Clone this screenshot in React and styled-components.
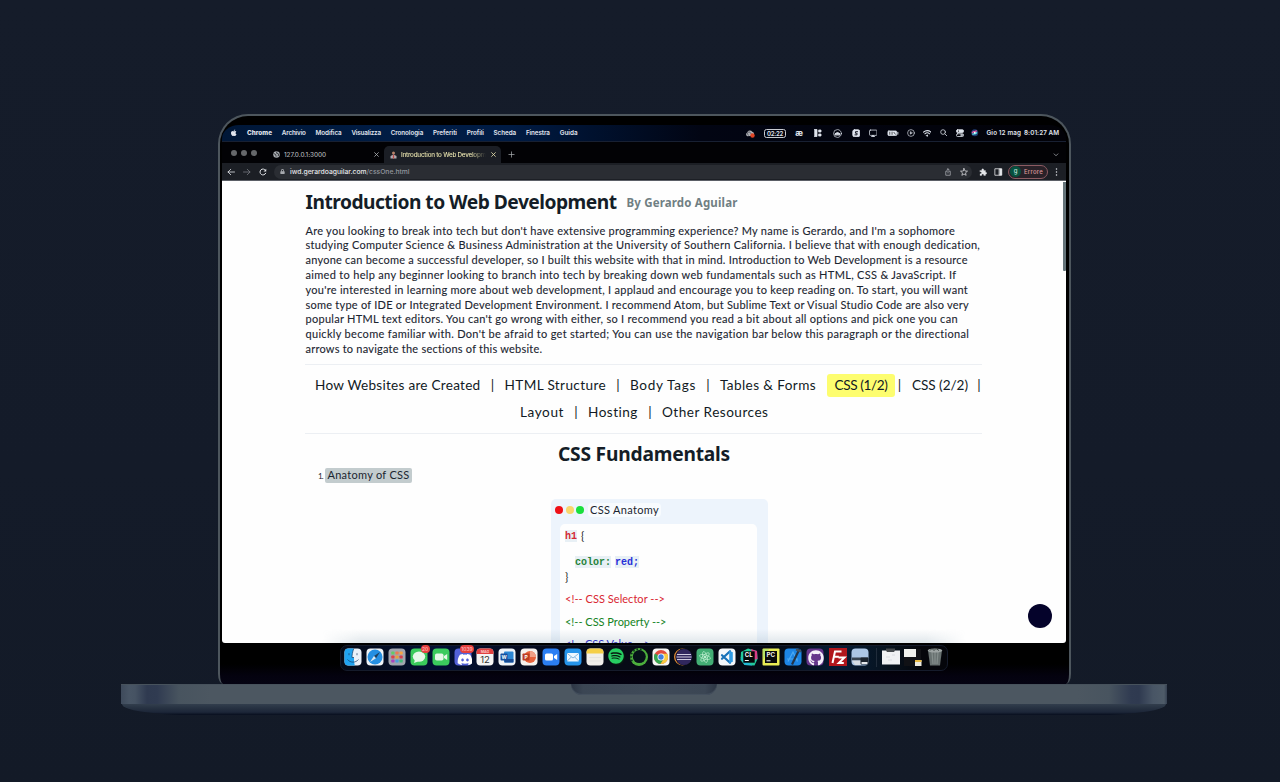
import React, { useLayoutEffect, useRef, useState } from "react";
import styled, { createGlobalStyle, css } from "styled-components";
import { FaApple, FaGithub, FaDiscord, FaSpotify, FaLock } from "react-icons/fa";

const rounded = `Lato, "Noto Sans", sans-serif`;
const heading = `"Noto Sans", "Open Sans", sans-serif`;
const system = `Inter, Roboto, sans-serif`;

const GlobalStyle = createGlobalStyle`
  * { box-sizing: border-box; }
  html, body { margin: 0; background: #141b29; }
  body { width: 1280px; height: 782px; overflow: hidden; }
`;

/* ---------- text that fills a known measure ---------- */
const Measure = styled.span`
  display: inline-block;
  flex: none;
  white-space: pre;
  width: ${(p) => p.$w}px;
`;

function Fit({ w, children, className }) {
  const ref = useRef(null);
  const [spacing, setSpacing] = useState(0);
  useLayoutEffect(() => {
    const range = document.createRange();
    range.selectNodeContents(ref.current);
    const natural = range.getBoundingClientRect().width;
    setSpacing((w - natural) / children.length);
  }, []);
  return (
    <Measure ref={ref} $w={w} className={className} style={{ letterSpacing: `${spacing}px` }}>
      {children}
    </Measure>
  );
}

/* ---------- laptop ---------- */
const Stage = styled.main`
  width: 1280px;
  height: 782px;
  padding-top: 114px;
  background: linear-gradient(180deg, #151c2a, #141b29 60%, #131a27);
`;
const Lid = styled.section`
  width: 853px;
  height: 570px;
  margin-left: 218px;
  padding: 9px 3px 0 2px;
  border: 2px solid #4d565d;
  border-bottom: 0;
  border-radius: 30px 30px 5px 5px / 30px 30px 10px 10px;
  background: linear-gradient(180deg, #000 0, #000 548px, #04020f 560px, #050312 100%);
  overflow: hidden;
`;
const Base = styled.section`
  width: 1046px;
  height: 20px;
  margin-left: 121px;
  display: flex;
  justify-content: center;
  border-top: 1px solid #47525c;
  background: linear-gradient(90deg, #3e4a5b 0, #485565 8px, #465363 14px, #2f3a50 26px, #303b51 36px,
    #48545f 58px, #4c5761 90px, #4c5761 956px, #48545f 988px, #303b51 1010px, #2f3a50 1018px, #485565 1032px, #4e5b68 1043px, #364152 100%);
`;
const Notch = styled.div`
  width: 146px;
  height: 11px;
  margin-top: -1px;
  border-radius: 0 0 11px 11px;
  background: linear-gradient(90deg, #2c3544 0, #3b4654 12px, #3f4a58 50%, #3b4654 134px, #2c3544 100%);
  box-shadow: inset 0 -1px 1px #465260;
`;
const Underside = styled.div`
  width: 1044px;
  height: 11px;
  margin-left: 122px;
  border-radius: 0 0 70px 70px / 0 0 11px 11px;
  background: linear-gradient(180deg, #323e4d 0, #273242 35%, #1c2638 75%, #0b1222 95%);
`;

/* ---------- mac menu bar ---------- */
const MenuBar = styled.header`
  height: 17px;
  display: flex;
  align-items: center;
  padding-left: 8px;
  border-radius: 17px 17px 0 0 / 14px 14px 0 0;
  border-bottom: 1px solid #182032;
  color: #e0e5ee;
  font: 600 6.3px ${system};
  background: linear-gradient(90deg, #001737 0, #001d46 200px, #001b43 290px, #00112e 370px, #020513 480px, #020208 100%);
`;
const AppMenus = styled.nav`
  display: flex;
  gap: 9.8px;
  margin-left: 9.5px;
  width: 493px;
`;
const StrongFit = styled(Fit)`
  font-weight: 800;
`;
const StatusIcons = styled.div`
  height: 16px;
  display: grid;
  grid-template-columns: 20px 30px 18px 19px 20px 18px 16px 23px 14px 18px 15px 17px 14px;
  align-items: center;
  justify-items: center;
  svg { display: block; }
`;
const Timer = styled.span`
  border: 1px solid #c9ccd2;
  border-radius: 2.5px;
  line-height: 7px;
  padding: 0 2px;
  font-size: 6px;
`;
const Ligature = styled.span`
  font: 800 8.5px/9px ${system};
`;
const Clock = styled.div`
  display: flex;
  gap: 3px;
  margin-left: 4.5px;
  white-space: nowrap;
`;

/* ---------- browser chrome ---------- */
const TabStrip = styled.div`
  height: 21px;
  display: flex;
  align-items: flex-end;
  background: #020205;
  font: 500 6.3px ${system};
  color: #aeb1b5;
`;
const Lights = styled.div`
  display: flex;
  gap: 4px;
  height: 20px;
  width: 43px;
  align-items: center;
  padding-left: 9px;
`;
const Light = styled.i`
  width: 6px;
  height: 6px;
  border-radius: 50%;
  background: #65676a;
`;
const Tab = styled.div`
  width: ${(p) => p.$w}px;
  height: 17px;
  display: flex;
  align-items: center;
  padding: 0 5px 0 ${(p) => p.$pad}px;
  gap: ${(p) => p.$gap}px;
  ${(p) =>
    p.$active &&
    css`
      background: #1b1e25;
      border-radius: 5px 5px 0 0;
      color: #e6e1ad;
    `}
`;
const Push = styled.span`
  margin-left: auto;
  display: flex;
  gap: 8px;
`;
const FadeFit = styled(Fit)`
  mask-image: linear-gradient(90deg, #000 82%, transparent);
`;
const StripButton = styled.span`
  height: 17px;
  display: flex;
  align-items: center;
  margin-left: ${(p) => p.$ml};
  margin-right: 7px;
`;
const Toolbar = styled.div`
  height: 18px;
  display: flex;
  align-items: center;
  padding-left: 5px;
  background: #1c1f25;
  border-bottom: 1px solid #5b5f66;
`;
const NavButtons = styled.div`
  display: flex;
  gap: 8px;
  width: 47px;
  align-items: center;
  color: #e2e4e8;
`;
const Omnibox = styled.div`
  width: 698px;
  height: 14px;
  border-radius: 7px;
  background: #2a2d33;
  display: flex;
  align-items: center;
  padding: 0 4px 0 6px;
  font: 500 6.8px ${system};
  color: #e6e7ea;
`;
const UrlParts = styled.span`
  display: flex;
  margin-left: 5px;
`;
const DimFit = styled(Fit)`
  color: #92969d;
`;
const ToolIcons = styled.div`
  display: flex;
  align-items: center;
  padding-left: 7px;
  color: #e4e6e9;
`;
const ErrorChip = styled.div`
  height: 14px;
  width: 40px;
  margin: 0 7px 0 -2px;
  display: flex;
  align-items: center;
  gap: 3px;
  padding-left: 1px;
  border: 1px solid #8c5b62;
  border-radius: 8px;
  background: #292128;
  color: #dc9a9e;
  font: 500 6px ${system};
`;
const Avatar = styled.span`
  width: 11px;
  height: 11px;
  border-radius: 50%;
  background: #07513f;
  color: #c8e6dc;
  text-align: center;
  line-height: 10px;
`;

/* ---------- web page ---------- */
const Viewport = styled.div`
  position: relative;
  height: 462px;
  padding: 0 84px 0 83px;
  background: #fefefe;
  border-radius: 0 0 3px 3px;
  overflow: hidden;
  color: #1b2530;
  font-family: ${rounded};
`;
const TitleRow = styled.div`
  height: 42.6px;
  display: flex;
  align-items: center;
  gap: 10px;
  padding-left: 0.5px;
`;
const Title = styled.h1`
  margin: 0;
  font: 700 19.2px/42px ${heading};
  color: #141d27;
`;
const Byline = styled.h4`
  margin: 2px 0 0;
  font: 700 11.5px/42px ${heading};
  color: #707f83;
`;
const Intro = styled.p`
  margin: 0;
  height: 141.4px;
  padding-left: 0.5px;
  border-bottom: 1px solid #eceff3;
  font-size: 11px;
  line-height: 14.8px;
  -webkit-text-stroke: 0.1px #1b2530;
`;
const Line = styled(Fit)`
  display: block;
`;
const Topics = styled.nav`
  height: 69px;
  padding-top: 7px;
  border-bottom: 1px solid #eceff3;
  font-size: 13.6px;
  color: #111a24;
`;
const TopicRow = styled.div`
  height: 26.5px;
  display: flex;
  align-items: center;
  padding-left: ${(p) => p.$pad}px;
`;
const Divider = styled.span`
  flex: none;
  width: ${(p) => p.$w || 24}px;
  text-align: center;
`;
const Current = styled.span`
  flex: none;
  width: 68px;
  height: 23px;
  margin: 0 0 0 11px;
  padding-left: 7.5px;
  line-height: 23px;
  border-radius: 3px;
  background: #fdfd6f;
`;
const Gap = styled.span`
  flex: none;
  width: 8px;
`;
const Subtitle = styled.h2`
  margin: 0;
  padding-left: 253px;
  font: 700 19.2px/40px ${heading};
  color: #141d27;
`;
const ListRow = styled.div`
  height: 16px;
  margin-top: -6px;
  padding-left: 13px;
  display: flex;
  align-items: center;
  gap: 2px;
  font-size: 8px;
`;
const Mark = styled.span`
  width: 87px;
  height: 15px;
  padding-left: 2.5px;
  border-radius: 2px;
  background: #c3ccce;
  font-size: 11px;
  line-height: 14px;
`;
const Card = styled.section`
  width: 217px;
  height: 190px;
  margin: 15px 0 0 246px;
  padding: 0 11px 0 9px;
  border-radius: 5px;
  background: #edf4fc;
`;
const CardHead = styled.div`
  height: 25px;
  display: flex;
  align-items: center;
  gap: 2.7px;
  margin-left: -5px;
  padding-bottom: 2px;
`;
const Dot = styled.i`
  width: 8px;
  height: 8px;
  border-radius: 50%;
  background: ${(p) => p.$c};
`;
const CardName = styled.span`
  height: 14px;
  margin-left: 1px;
  padding: 0 2px;
  border-radius: 4px;
  background: #f8fbfe;
  font-size: 11px;
  line-height: 14px;
`;
const Code = styled.div`
  height: 160px;
  padding: 4px 0 0 5px;
  border-radius: 5px;
  background: #fefefe;
  font-size: 11px;
`;
const CodeRow = styled.div`
  height: ${(p) => p.$h}px;
  display: flex;
  align-items: center;
  gap: 4px;
  line-height: 12px;
  padding-left: ${(p) => p.$indent || 0}px;
  color: ${(p) => p.$c || "#222"};
`;
const Token = styled(Fit)`
  height: 12px;
  line-height: 13px;
  background: #e8f0f5;
  font-family: "Liberation Mono", monospace;
  font-weight: 700;
  font-size: 10px;
`;
const RedToken = styled(Token)` color: #d52a36; `;
const GreenToken = styled(Token)` color: #26833a; `;
const BlueToken = styled(Token)` color: #2730d8; `;
const Scrollbar = styled.div`
  position: absolute;
  right: 0;
  top: 1px;
  width: 3.5px;
  height: 89px;
  border-radius: 0 0 1px 1px;
  background: #65747a;
`;
const FloatButton = styled.div`
  position: absolute;
  right: 14.5px;
  bottom: 15px;
  width: 24px;
  height: 24px;
  border-radius: 50%;
  background: #05032b;
`;
const DockGlow = styled.div`
  position: absolute;
  left: 100px;
  right: 100px;
  bottom: 0;
  height: 14px;
  background: linear-gradient(180deg, transparent, rgba(120, 150, 170, 0.22));
  mask-image: linear-gradient(90deg, transparent, #000 40px, #000 calc(100% - 40px), transparent);
`;

/* ---------- dock ---------- */
const Dock = styled.footer`
  width: 608px;
  height: 26px;
  margin: 2px 0 0 118px;
  display: flex;
  align-items: center;
  gap: 4.05px;
  padding: 0 0 2px 2.5px;
  border: 1px solid #151b2b;
  border-radius: 7px;
  background: linear-gradient(90deg, #050b18 0, #021034 100px, #050b20 180px, #070b16 280px, #050a14 430px, #051b35 500px, #07131f 545px, #05060b 580px);
`;
const DockItem = styled.span`
  position: relative;
  width: 18px;
  height: 18px;
  flex: none;
  svg { display: block; }
`;
const Badge = styled.b`
  position: absolute;
  top: -3px;
  right: -2px;
  min-width: 9px;
  height: 8px;
  padding: 0 1px;
  border-radius: 4px;
  background: #e5403e;
  color: #ffb9b9;
  font: 500 5px/8px ${system};
  text-align: center;
`;
const DockRule = styled.i`
  width: 1px;
  height: 19px;
  margin: 0 1px 0 3px;
  background: #202c3b;
`;

/* ---------- drawings ---------- */
const Glyph = ({ s = 9, w, children, vb = "0 0 16 16", sw = 1.6 }) => (
  <svg width={w || s} height={s} viewBox={vb} fill="none" stroke="currentColor" strokeWidth={sw} strokeLinecap="round" strokeLinejoin="round">
    {children}
  </svg>
);
const Close = () => <Glyph s={5}><path d="M2 2L14 14M14 2L2 14" strokeWidth="2.6" /></Glyph>;

const Tile = ({ fill, children }) => (
  <svg width="18" height="18" viewBox="0 0 18 18">
    {fill && <rect x=".5" y=".5" width="17" height="17" rx="4" fill={fill} />}
    {children}
  </svg>
);
const T = ({ x, y, size, fill, children }) => (
  <text x={x} y={y} fontSize={size} fill={fill} fontFamily="Inter, sans-serif" fontWeight="700" textAnchor="middle">{children}</text>
);

const ring = Array.from({ length: 14 }, (_, i) => (i * Math.PI * 2) / 14);
const pads = ["#65ca66", "#ed7b52", "#f5a344", "#dd414b", "#e9a03a", "#d53e4c", "#a744c0", "#4b9edc", "#43bb79"];

const dockIcons = [
  <Tile fill="#eaf1f9">
    <path d="M4.5.5h5.2C8.5 4 8 7 8 9.5h2c0 3 .2 5.500.8 8H4.500a4 4 0 0 1-4-4v-9a4 4 0 0 1 4-4Z" fill="#1fa4f2" />
    <path d="M5 5.200v2M13 5.200v2M3.500 11.500c3 3.500 8 3.500 11 0M9.700.7C8.500 4 8 7 8 9.500h2" stroke="#173b62" strokeWidth=".7" fill="none" />
  </Tile>,
  <Tile fill="#eff3f6">
    <circle cx="9" cy="9" r="7.500" fill="#258fe2" />
    <path d="M14 4L10 10.200 8 8Z" fill="#20405e" /><path d="M4 14l4-6 2 2.200Z" fill="#dce8ef" />
  </Tile>,
  <Tile fill="#a1a5af">
    {pads.map((c, i) => <rect key={c} x={3.300 + (i % 3) * 4.100} y={3.600 + Math.floor(i / 3) * 4} width="3.200" height="3" rx=".7" fill={c} />)}
  </Tile>,
  <Tile fill="#3acb5b"><ellipse cx="9" cy="8.600" rx="6.200" ry="5.200" fill="#e6f8e8" /><path d="M5 11.500L4 15l4-1.500" fill="#e6f8e8" /></Tile>,
  <Tile fill="#3bcb5d"><rect x="3" y="5.500" width="8.500" height="7" rx="1.800" fill="#e6f8e8" /><path d="M12 8l3.200-2v6L12 10Z" fill="#e6f8e8" /></Tile>,
  <Tile fill="#5261d8"><FaDiscord x="3" y="3.500" width="12" height="12" color="#fff" /></Tile>,
  <Tile fill="#f5f5f5">
    <path d="M.5 6V4.500a4 4 0 0 1 4-4h9a4 4 0 0 1 4 4V6Z" fill="#e0403f" />
    <T x="9" y="4.800" size="3.600" fill="#fbc9c6">MAG</T>
    <text x="9" y="15" fontSize="9.500" fill="#333" textAnchor="middle" fontFamily="Inter">12</text>
  </Tile>,
  <Tile fill="#eef3f8"><rect x="6" y="3.500" width="9.500" height="11" rx="1" fill="#2b86d4" /><path d="M6.500 11h9v3.500h-9Z" fill="#174b95" /><rect x="2.500" y="5.500" width="7" height="7" rx=".8" fill="#164f9e" /><T x="6" y="11" size="5" fill="#fff">W</T></Tile>,
  <Tile fill="#f6f1ee"><circle cx="10" cy="9" r="6" fill="#e8623c" /><path d="M10 9V3a6 6 0 0 1 6 6Z" fill="#f2a087" /><rect x="2.500" y="5.500" width="7" height="7" rx=".8" fill="#bd3d22" /><T x="6" y="11" size="5" fill="#fff">P</T></Tile>,
  <Tile fill="#2b7ff4"><rect x="3" y="5.500" width="8" height="7" rx="1.600" fill="#fff" /><path d="M12 8l3.200-2v6L12 10Z" fill="#fff" /></Tile>,
  <Tile fill="#2594ea"><rect x="3" y="5" width="12" height="8.500" rx="1" fill="#eef8ff" /><path d="M3.300 5.500L9 10l5.700-4.500M3.300 13l4-4M14.700 13l-4-4" stroke="#6fa8d5" strokeWidth=".8" fill="none" /></Tile>,
  <Tile fill="#f1efea"><path d="M.5 5.500v-1a4 4 0 0 1 4-4h9a4 4 0 0 1 4 4v1Z" fill="#f5cf47" /><path d="M3 9.500h12M3 13h12" stroke="#dddcd9" strokeWidth=".6" /></Tile>,
  <Tile><circle cx="9" cy="9" r="8" fill="#091a10" /><FaSpotify x="0" y="0" width="18" height="18" color="#27ce62" /></Tile>,
  <Tile><circle cx="9" cy="9" r="9" fill="#4cae3c" /><circle cx="9.300" cy="8.600" r="6.500" fill="#061119" />
    {ring.slice(6, 12).map((a) => <circle key={a} cx={9 + 8 * Math.cos(a)} cy={9 + 8 * Math.sin(a)} r=".9" fill="#0b3019" />)}</Tile>,
  <Tile fill="#f6f6f4"><circle cx="9" cy="9" r="7" fill="#e24b3e" /><path d="M9 9L2.900 5.500A7 7 0 0 0 8.500 16L12 10.500Z" fill="#35a650" /><path d="M9 5.800h6.200A7 7 0 0 1 8.500 16L12 10.500Z" fill="#f8cb3f" /><circle cx="9" cy="9" r="3.500" fill="#fff" /><circle cx="9" cy="9" r="2.700" fill="#407fde" /></Tile>,
  <Tile><circle cx="8.500" cy="9" r="8.500" fill="#e08b38" /><circle cx="9.800" cy="9" r="8.500" fill="#0a0c18" /><circle cx="10" cy="9" r="8" fill="#30275d" /><path d="M3 6.500h14M2.500 9h15M3 11.500h14" stroke="#cfcbe0" strokeWidth="1.100" /></Tile>,
  <Tile fill="#43ae75"><g fill="none" stroke="#c2efd2" strokeWidth=".7"><ellipse cx="9" cy="9" rx="5.600" ry="2.100" transform="rotate(15 9 9)" /><ellipse cx="9" cy="9" rx="5.600" ry="2.100" transform="rotate(75 9 9)" /><ellipse cx="9" cy="9" rx="5.600" ry="2.100" transform="rotate(135 9 9)" /></g><circle cx="9" cy="9" r="1" fill="#e2ffeb" /></Tile>,
  <Tile fill="#f3f7fa"><path d="M12 3.200L4 10.800M12 14.800L4 7.200" stroke="#1771b7" strokeWidth="2.200" strokeLinecap="round" /><path d="M11.200 2.800l3.600 1.400v9.600l-3.600 1.400Z" fill="#2e9be4" /></Tile>,
  <Tile><path d="M1 4l7-3.500L17 3l.5 8-3 6.500-10-.5L.5 12Z" fill="#22c99a" /><path d="M11 1l6 2 .5 8-4 1Z" fill="#da3c86" /><path d="M.5 9l4 8 8 .5Z" fill="#22b8d5" /><rect x="3.300" y="3.300" width="11.400" height="11.400" fill="#050708" /><T x="8.700" y="9.300" size="6" fill="#fff">CL</T><path d="M4.800 12.500h4" stroke="#fff" /></Tile>,
  <Tile><rect x=".5" y=".5" width="17" height="17" rx="1" fill="#e9ed55" /><path d="M1 1h6L1 12Z" fill="#b5e465" /><rect x="3" y="3" width="12" height="12" fill="#080a0a" /><T x="8.700" y="9.200" size="6.200" fill="#f1f2e8">PC</T><path d="M4.500 12.800h4" stroke="#fff" /></Tile>,
  <Tile fill="#1d86e5"><path d="M4 13.500L9 4l4.500 9.500M3 11h11" stroke="#4daaf2" strokeWidth="1.200" fill="none" /><path d="M15.500 1L8 16.500" stroke="#243547" strokeWidth="2.200" /><path d="M12 1.500l5 2" stroke="#44515e" strokeWidth="2" /></Tile>,
  <Tile fill="#65358c"><FaGithub x="2" y="2" width="14" height="14" color="#f4effa" /></Tile>,
  <Tile><rect width="18" height="18" fill="#b1161c" /><path d="M3.500 15L6 3.500h6.500M4.800 8.800h5M9.500 9.500h6L9.800 15h5" stroke="#fff" strokeWidth="2" fill="none" /></Tile>,
  <Tile fill="#acc6e5"><path d="M1 9.500h16v3H1Z" fill="#394552" /><path d="M1 12.500h9V17H4Z" fill="#d5dde5" /><rect x="9.500" y="9.500" width="8" height="7" rx="1" fill="#1b232d" /><path d="M10.500 14h6v2h-6Z" fill="#e6e9ec" /></Tile>,
];
const badges = { 3: "20", 5: "1039" };

const shelf = [
  <Tile><path d="M4 .5h9V5H4Z" fill="#45494d" /><path d="M0 2.500h4l1 1.500h7l1-1.500h5v14H0Z" fill="#f0f1f3" /><path d="M4 9h4m2-2h3M6 12h4" stroke="#d4d8dc" strokeWidth=".8" /></Tile>,
  <Tile><path d="M0 1h17v17H0Z" fill="#101115" /><rect x="0" y="1" width="12" height="8" fill="#f0f1ed" /><rect x="11" y="12" width="6.500" height="6" fill="#eceae0" /><path d="M11 12h6.500v2H11Z" fill="#e9bc45" /></Tile>,
  <Tile><path d="M2 2h14l-2 15.500H4Z" fill="#687170" /><path d="M6 4l1 12M9 4v12M12 4l-1 12" stroke="#858e8c" strokeWidth="1.200" /><ellipse cx="9" cy="2.500" rx="7.300" ry="2" fill="#9da4a3" /><path d="M4 2.500l2-2 2 2 2-2 3 2" stroke="#3b4241" strokeWidth="1" fill="none" /></Tile>,
];

const menus = [["Archivio", 24], ["Modifica", 26], ["Visualizza", 29.5], ["Cronologia", 32.5], ["Preferiti", 24], ["Profili", 17], ["Scheda", 22.5], ["Finestra", 24], ["Guida", 18]];

const intro = [
  ["Are you looking to break into tech but don't have extensive programming experience? My name is Gerardo, and I'm a sophomore", 649.5],
  ["studying Computer Science & Business Administration at the University of Southern California. I believe that with enough dedication,", 675],
  ["anyone can become a successful developer, so I built this website with that in mind. Introduction to Web Development is a resource", 662.5],
  ["aimed to help any beginner looking to branch into tech by breaking down web fundamentals such as HTML, CSS & JavaScript. If", 651],
  ["you're interested in learning more about web development, I applaud and encourage you to keep reading on. To start, you will want", 662.5],
  ["some type of IDE or Integrated Development Environment. I recommend Atom, but Sublime Text or Visual Studio Code are also very", 663.5],
  ["popular HTML text editors. You can't go wrong with either, so I recommend you read a bit about all options and pick one you can", 652.5],
  ["quickly become familiar with. Don't be afraid to get started; You can use the navigation bar below this paragraph or the directional", 664],
  ["arrows to navigate the sections of this website.", 237],
];

function SystemMenu() {
  return (
    <MenuBar>
      <FaApple size={7.5} />
      <AppMenus>
        <StrongFit w={25}>Chrome</StrongFit>
        {menus.map(([name, w]) => <Fit key={name} w={w}>{name}</Fit>)}
      </AppMenus>
      <StatusIcons>
        <Glyph s={9} w={10} vb="0 0 18 16"><path d="M4 13a4 4 0 0 1 0-7 5 5 0 0 1 9-1 4 4 0 0 1 2 7" fill="#aeb0b5" stroke="none" /><path d="M6 11a3 3 0 1 1 4-4l2 3" stroke="#55565e" /><circle cx="13.500" cy="11.500" r="4" fill="#e04425" stroke="none" /></Glyph>
        <Timer><Fit w={16}>02:22</Fit></Timer>
        <Ligature>æ</Ligature>
        <Glyph s={8}><path d="M1 1h5v14H1zM10 2h4v4h-4zM10 10h4v4h-4z" fill="currentColor" /></Glyph>
        <Glyph s={9}><circle cx="8" cy="8" r="7" strokeWidth="1.200" /><path d="M3.500 10a2 2 0 0 1 2-2.500 3 3 0 0 1 5 0 2 2 0 0 1 2 2.500Z" fill="currentColor" /></Glyph>
        <Glyph s={8.5}><rect x="1.500" y="1.500" width="13" height="13" rx="3" fill="currentColor" /><path d="M10.500 5h-4v3h3v3h-4" stroke="#11131e" strokeWidth="1.800" /></Glyph>
        <Glyph s={8.5}><rect x="1" y="2" width="14" height="10" rx="1.500" strokeWidth="1.400" /><path d="M5.500 14.500h5L8 12Z" fill="currentColor" /></Glyph>
        <Glyph s={6.5} w={12} vb="0 0 26 14"><rect x="2" y="2" width="19" height="10" rx="2" fill="currentColor" /><path d="M23.500 5v4" strokeWidth="2" /><path d="M6 4.500v5M11 4.500v5M15 5l3 4" stroke="#222" /></Glyph>
        <Glyph s={8}><circle cx="8" cy="8" r="6.800" strokeWidth="1.300" /><path d="M6.500 5.500v5l4-2.500Z" fill="currentColor" strokeWidth=".8" /></Glyph>
        <Glyph s={8.5}><path d="M1 6c4-4 10-4 14 0M3.500 9c3-2.600 6-2.600 9 0" strokeWidth="2" /><path d="M6.500 12a2 2 0 0 1 3 0L8 13.500Z" fill="currentColor" /></Glyph>
        <Glyph s={7.5}><circle cx="6.500" cy="6.500" r="5" /><path d="M10.500 10.500L15 15" /></Glyph>
        <Glyph s={8}><rect x="1" y="1.500" width="14" height="5.500" rx="2" fill="currentColor" /><rect x="1" y="9.500" width="14" height="5.500" rx="2" /><circle cx="5" cy="4.200" r="1.300" fill="#111" stroke="none" /><path d="M10 12.200h3" strokeWidth="3" /></Glyph>
        <Glyph s={7.5}><circle cx="8" cy="8" r="7.500" fill="#203b70" stroke="none" /><path d="M3 8c3-6 6 1 8-4" stroke="#db579e" strokeWidth="3" /><path d="M4 11c4-2 5 1 8-3" stroke="#55d9df" strokeWidth="3" /><circle cx="8" cy="8" r="2" fill="#fff" stroke="none" /></Glyph>
      </StatusIcons>
      <Clock><Fit w={34.5}>Gio 12 mag</Fit><Fit w={35}>8:01:27 AM</Fit></Clock>
    </MenuBar>
  );
}

function Browser() {
  return (
    <>
      <TabStrip>
        <Lights><Light /><Light /><Light /></Lights>
        <Tab $w={119} $pad={8} $gap={4}>
          <Glyph s={7}><circle cx="8" cy="8" r="7.500" fill="#a9adb2" stroke="none" /><path d="M2 6l4 2 1 4M9 2L8 5l5 2-1 4" stroke="#25272c" strokeWidth="2" /></Glyph>
          <Fit w={42}>127.0.0.1:3000</Fit>
          <Push><Close /></Push>
        </Tab>
        <Tab $w={117} $pad={6} $gap={4} $active>
          <Glyph s={8} w={7} vb="0 0 14 16"><circle cx="7" cy="4" r="3" fill="#b8846b" stroke="none" /><path d="M1 15V10l6-3 6 3v5Z" fill="#b0a8ae" stroke="none" /><path d="M7 8v6" stroke="#bc4948" strokeWidth="2.500" /></Glyph>
          <FadeFit w={85}>Introduction to Web Developm</FadeFit>
          <Push><Close /></Push>
        </Tab>
        <StripButton $ml="7px"><Glyph s={7}><path d="M8 2v12M2 8h12" /></Glyph></StripButton>
        <StripButton $ml="auto"><Glyph s={6}><path d="M3 5l5 5 5-5" strokeWidth="2" /></Glyph></StripButton>
      </TabStrip>
      <Toolbar>
        <NavButtons>
          <Glyph s={8}><path d="M15 8H2M7.500 2.500L2 8l5.500 5.500" /></Glyph>
          <Glyph s={8}><path d="M1 8h13M8.500 2.500L14 8l-5.500 5.500" stroke="#777a80" /></Glyph>
          <Glyph s={8}><path d="M13.500 10.500A6 6 0 1 1 13 4.500" strokeWidth="2" /><path d="M14.500 1.500v5.500H9Z" fill="currentColor" stroke="none" /></Glyph>
        </NavButtons>
        <Omnibox>
          <FaLock size={5} color="#a6a9ae" />
          <UrlParts><Fit w={76.5}>iwd.gerardoaguilar.com</Fit><DimFit w={43}>/cssOne.html</DimFit></UrlParts>
          <Push>
            <Glyph s={8}><path d="M5.500 6.500H3.500v8h9v-8h-2M8 10V1.500M5.500 4L8 1.500 10.500 4" strokeWidth="1.400" stroke="#b3b6bb" /></Glyph>
            <Glyph s={8}><path d="M8 1l2 5 5 .3-4 3.400 1.300 5L8 12l-4.300 2.700L5 9.700 1 6.300 6 6Z" strokeWidth="1.400" /></Glyph>
          </Push>
        </Omnibox>
        <ToolIcons>
          <Glyph s={8}><path d="M2 5h3.500V3.500a2 2 0 0 1 4 0V5H13v3.500h.5a2 2 0 0 1 0 4H13V15H9.500v-1a2 2 0 0 0-4 0v1H2v-3.500h1a2 2 0 0 0 0-4H2Z" fill="currentColor" strokeWidth=".5" /></Glyph>
          <Glyph s={8} w={23}><rect x="1.500" y="1.500" width="13" height="13" /><path d="M10 2h4v12h-4Z" fill="currentColor" /></Glyph>
        </ToolIcons>
        <ErrorChip><Avatar>g</Avatar><Fit w={19}>Errore</Fit></ErrorChip>
        <Glyph s={8} w={3} vb="0 0 4 16"><path d="M2 2v.1M2 8v.1M2 14v.1" stroke="#e4e6e9" strokeWidth="3" /></Glyph>
      </Toolbar>
    </>
  );
}

function WebPage() {
  return (
    <Viewport>
      <TitleRow>
        <Title><Fit w={311}>Introduction to Web Development</Fit></Title>
        <Byline><Fit w={111}>By Gerardo Aguilar</Fit></Byline>
      </TitleRow>
      <Intro>{intro.map(([text, w]) => <Line key={text} w={w}>{text}</Line>)}</Intro>
      <Topics>
        <TopicRow $pad={10}>
          <Fit w={165.5}>How Websites are Created</Fit><Divider>|</Divider>
          <Fit w={101.5}>HTML Structure</Fit><Divider>|</Divider>
          <Fit w={66}>Body Tags</Fit><Divider>|</Divider>
          <Fit w={96}>Tables & Forms</Fit>
          <Current><Fit w={53}>CSS (1/2)</Fit></Current><Divider $w={9}>|</Divider><Gap />
          <Fit w={56}>CSS (2/2)</Fit><Divider $w={22}>|</Divider>
        </TopicRow>
        <TopicRow $pad={215}>
          <Fit w={44}>Layout</Fit><Divider>|</Divider>
          <Fit w={50}>Hosting</Fit><Divider>|</Divider>
          <Fit w={106.5}>Other Resources</Fit>
        </TopicRow>
      </Topics>
      <Subtitle><Fit w={172}>CSS Fundamentals</Fit></Subtitle>
      <ListRow><Fit w={5}>1.</Fit><Mark><Fit w={82}>Anatomy of CSS</Fit></Mark></ListRow>
      <Card>
        <CardHead>
          <Dot $c="#ef1017" /><Dot $c="#f8d66d" /><Dot $c="#19df3d" />
          <CardName><Fit w={69}>CSS Anatomy</Fit></CardName>
        </CardHead>
        <Code>
          <CodeRow $h={16}><RedToken w={12}>h1</RedToken><span>{"{"}</span></CodeRow>
          <CodeRow $h={11} />
          <CodeRow $h={15} $indent={10}><GreenToken w={36}>color:</GreenToken><BlueToken w={24}>red;</BlueToken></CodeRow>
          <CodeRow $h={14}>{"}"}</CodeRow>
          <CodeRow $h={4} />
          <CodeRow $h={22.5} $c="#d92632"><Fit w={100}>{"<!-- CSS Selector -->"}</Fit></CodeRow>
          <CodeRow $h={22.5} $c="#148324"><Fit w={101.5}>{"<!-- CSS Property -->"}</Fit></CodeRow>
          <CodeRow $h={22.5} $c="#1d22c9"><Fit w={85}>{"<!-- CSS Value -->"}</Fit></CodeRow>
        </Code>
      </Card>
      <DockGlow />
      <Scrollbar />
      <FloatButton />
    </Viewport>
  );
}

export default function App() {
  return (
    <Stage>
      <GlobalStyle />
      <Lid>
        <SystemMenu />
        <Browser />
        <WebPage />
        <Dock>
          {dockIcons.map((icon, i) => (
            <DockItem key={i}>{icon}{badges[i] && <Badge>{badges[i]}</Badge>}</DockItem>
          ))}
          <DockRule />
          {shelf.map((icon, i) => <DockItem key={i}>{icon}</DockItem>)}
        </Dock>
      </Lid>
      <Base><Notch /></Base>
      <Underside />
    </Stage>
  );
}
